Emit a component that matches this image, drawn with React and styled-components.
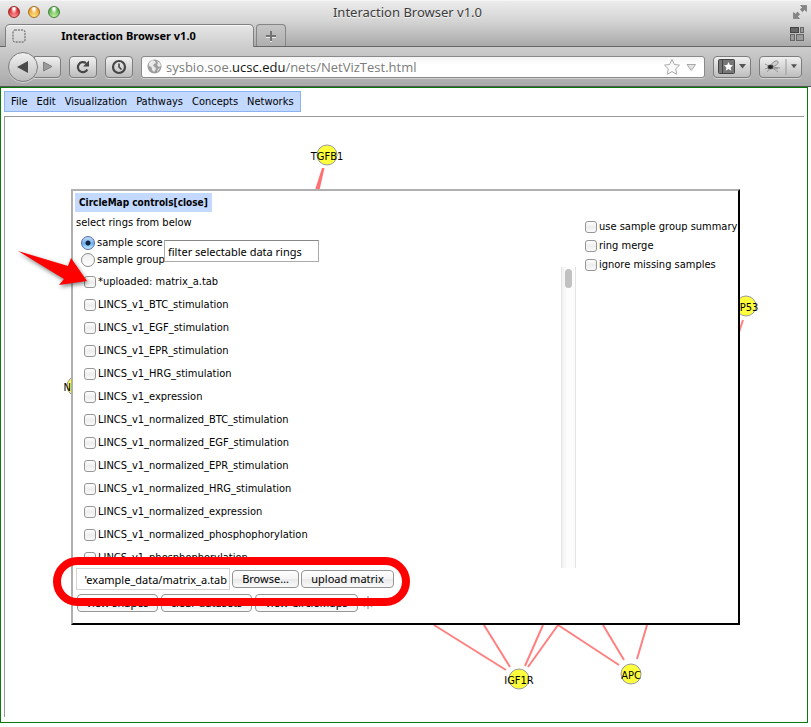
import React from "react";
import styled, { createGlobalStyle, css } from "styled-components";

const GlobalStyle = createGlobalStyle`
  * { box-sizing: border-box; }
  body { margin: 0; background: #fff; color: #000; font: 11px/16px "DejaVu Sans Condensed", "DejaVu Sans", sans-serif; }
  button, input { font: 11px/16px "Noto Sans", "Open Sans", sans-serif; color: inherit; margin: 0; }
`;

const Window = styled.div`
  min-height: 100vh;
  display: flex;
  flex-direction: column;
`;

const TitleArea = styled.header`
  height: 47px;
  display: flex;
  flex-direction: column;
  background: linear-gradient(#ececec, #d4d4d4 45%, #a9a9a9);
  border-bottom: 1px solid #666;
  border-top: 1px solid #f6f6f6;
`;

const TitleRow = styled.div`
  display: grid;
  grid-template-columns: 64px 1fr 64px;
  align-items: center;
  height: 22px;
  padding: 0 4px 0 8px;
`;

const Lights = styled.div`
  display: flex;
  gap: 8px;
`;

const Light = styled.button`
  width: 12px;
  height: 12px;
  padding: 0;
  border: 1px solid ${(p) => p.$edge};
  border-radius: 50%;
  background: radial-gradient(ellipse at 50% 15%, #fff 0 12%, transparent 45%),
    radial-gradient(circle at 50% 100%, ${(p) => p.$glow}, ${(p) => p.$fill} 75%);
`;

const WindowTitle = styled.h1`
  margin: 0;
  font-family: "Noto Sans", sans-serif;
  font-size: 13px;
  font-weight: 400;
  line-height: 18px;
  text-align: center;
  color: #3c3c3c;
  text-shadow: 0 1px 0 #f4f4f4;
`;

const IconButton = styled.button`
  display: grid;
  place-items: center;
  justify-self: end;
  border: 0;
  padding: 0;
  background: none;
`;

const TabStrip = styled.div`
  display: flex;
  align-items: flex-end;
  gap: 2px;
  height: 23px;
  padding: 0 7px 0 5px;
`;

const Tab = styled.button`
  display: grid;
  grid-template-columns: 14px 1fr 16px;
  align-items: center;
  width: 249px;
  height: 23px;
  margin-bottom: -1px;
  padding: 0 6px;
  border: 1px solid #808080;
  border-bottom: 0;
  border-radius: 5px 5px 0 0;
  background: linear-gradient(#e6e6e6, #cdcdcd);
  box-shadow: inset 0 1px #f8f8f8;
  font-weight: 700;
`;

const NewTab = styled.button`
  display: grid;
  place-items: center;
  width: 30px;
  height: 22px;
  border: 1px solid #858585;
  border-bottom: 0;
  border-radius: 4px 4px 0 0;
  background: linear-gradient(#c6c6c6, #aeaeae);
`;

const Spacer = styled.div`
  flex: 1;
`;

const Toolbar = styled.nav`
  display: flex;
  align-items: center;
  gap: 8px;
  height: 40px;
  padding: 0 9px 0 8px;
  background: linear-gradient(#cdcdcd, #a9a9a9);
  border-bottom: 1px solid #555;
`;

const raised = css`
  border: 1px solid #7d7d7d;
  background: linear-gradient(#f0f0f0, #bdbdbd);
  box-shadow: 0 1px #d5d5d5;
`;

const ToolButton = styled.button`
  ${raised}
  display: flex;
  align-items: center;
  justify-content: center;
  gap: 4px;
  width: ${(p) => p.$w || 28}px;
  height: 22px;
  padding: 0;
  border-radius: 4px;
`;

const BackForward = styled.div`
  display: flex;
  align-items: center;
`;

const Back = styled.button`
  ${raised}
  display: grid;
  place-items: center;
  width: 30px;
  height: 30px;
  padding: 0;
  border-radius: 50%;
  z-index: 1;
`;

const Forward = styled(ToolButton)`
  width: 27px;
  margin-left: -4px;
  border-radius: 0 4px 4px 0;
`;

const AddressBar = styled.div`
  flex: 1;
  display: flex;
  align-items: center;
  gap: 4px;
  height: 22px;
  padding: 0 5px;
  border: 1px solid #8a8a8a;
  border-radius: 3px;
  background: linear-gradient(#f4f4f4, #fff 40%);
  box-shadow: 0 1px #cfcfcf;
`;

const Address = styled.div`
  flex: 1;
  font-family: "Open Sans", "Noto Sans", sans-serif;
  font-size: 13px;
  line-height: 20px;
  color: #7b7b7b;
  b { font-weight: 400; color: #111; }
`;

const Page = styled.main`
  flex: 1;
  display: flex;
  flex-direction: column;
  margin: 0 3px 4px 0;
  padding: 3px 3px 5px;
  border: 1px solid #0a7a0a;
`;

const MenuBar = styled.nav`
  align-self: flex-start;
  display: flex;
  gap: 9px;
  padding: 1px 6px;
  border: 1px solid #8db2f3;
  background: #c3d9ff;
`;

const MenuLink = styled.a`
  line-height: 17px;
  color: #000;
  text-decoration: none;
`;

const Canvas = styled.section`
  position: relative;
  flex: 1;
  min-height: 600px;
  margin-top: 4px;
  border: solid #999;
  border-width: 1px 0 0 1px;
`;

const Network = styled.svg`
  position: absolute;
  left: 0;
  top: 0;
  width: 100%;
  height: 100%;
  font-size: 11px;
`;

const Dialog = styled.section`
  position: absolute;
  left: 66px;
  right: 64px;
  top: 72px;
  padding: 2px 2px 8px;
  background: #fff;
  border: 2px solid;
  border-color: #b0b0b0 #000 #000 #b0b0b0;
`;

const DialogTitle = styled.h2`
  width: fit-content;
  margin: 0;
  padding: 0 4px;
  background: #c3d9ff;
  font-size: 10px;
  line-height: 19px;
`;

const TitleClose = styled.button`
  border: 0;
  padding: 0;
  background: none;
  font: inherit;
`;

const Columns = styled.div`
  display: flex;
  justify-content: space-between;
`;

const Rings = styled.div`
  width: 501px;
`;

const Hint = styled.p`
  margin: 0;
  padding: 3px 1px;
`;

const Filters = styled.div`
  display: flex;
  align-items: flex-start;
  height: 33px;
  padding-left: 6px;
`;

const Radios = styled.div`
  width: 83px;
`;

const Label = styled.label`
  display: flex;
  align-items: center;
  gap: 2px;
  height: ${(p) => p.$h}px;
  white-space: nowrap;
`;

const Radio = styled.input`
  appearance: none;
  flex: none;
  width: 14px;
  height: 14px;
  border: 1px solid #8b8b8b;
  border-radius: 50%;
  background: linear-gradient(#eee, #fff);
  &:checked {
    border-color: #5069a8;
    background: radial-gradient(circle, #10233f 0 2px, transparent 3px),
      linear-gradient(#c6dcf5, #6db1ee 55%, #c2f0ff);
  }
`;

const Check = styled.input`
  appearance: none;
  flex: none;
  width: 12px;
  height: 12px;
  border: 1px solid #969696;
  border-radius: 3px;
  background: linear-gradient(#fff, #ededed 50%, #fafafa);
`;

const FilterInput = styled.input`
  width: 155px;
  height: 22px;
  margin-top: 6px;
  padding: 0 3px;
  border: 1px solid #aaa;
  border-top-color: #888;
  background: #fff;
`;

const ListBox = styled.div`
  display: flex;
  height: 301px;
`;

const List = styled.ul`
  flex: 1;
  margin: 0;
  padding: 3px 9px;
  overflow: hidden;
  list-style: none;
`;

const ScrollTrack = styled.div`
  width: 15px;
  padding: 2px 3px;
  border: solid #e4e4e4;
  border-width: 0 1px;
  background: linear-gradient(90deg, #f1f1f1, #fcfcfc 40%);
`;

const ScrollThumb = styled.div`
  height: 19px;
  border-radius: 4px;
  background: #c1c1c1;
`;

const Options = styled.div`
  width: 151px;
  padding-top: 5px;
`;

const Actions = styled.div`
  display: flex;
  align-items: center;
  gap: ${(p) => p.$gap}px;
  height: ${(p) => p.$h}px;
  padding-left: ${(p) => p.$indent}px;
`;

const FileField = styled.input`
  width: 154px;
  height: 22px;
  padding: 0 2px;
  border: 1px solid #d4d4d4;
  text-align: right;
`;

const Push = styled.button`
  height: 18px;
  width: ${(p) => p.$w}px;
  padding: 0;
  line-height: 16px;
  white-space: nowrap;
  border: 1px solid #959595;
  border-radius: 4px;
  background: linear-gradient(#fff, #f4f4f4 48%, #e9e9e9 52%, #fafafa);
`;

const Highlight = styled.div`
  position: absolute;
  left: -20px;
  bottom: 17px;
  width: 357px;
  height: 49px;
  border: 8px solid #f00;
  border-radius: 25px;
  pointer-events: none;
`;

const Arrow = styled.svg`
  position: absolute;
  left: -60px;
  top: 52px;
  filter: drop-shadow(1px 2px 2px rgba(0, 0, 0, 0.5));
  pointer-events: none;
`;

const rings = [
  "*uploaded: matrix_a.tab",
  "LINCS_v1_BTC_stimulation",
  "LINCS_v1_EGF_stimulation",
  "LINCS_v1_EPR_stimulation",
  "LINCS_v1_HRG_stimulation",
  "LINCS_v1_expression",
  "LINCS_v1_normalized_BTC_stimulation",
  "LINCS_v1_normalized_EGF_stimulation",
  "LINCS_v1_normalized_EPR_stimulation",
  "LINCS_v1_normalized_HRG_stimulation",
  "LINCS_v1_normalized_expression",
  "LINCS_v1_normalized_phosphophorylation",
  "LINCS_v1_phosphophorylation",
];

const options = ["use sample group summary", "ring merge", "ignore missing samples"];
const menus = ["File", "Edit", "Visualization", "Pathways", "Concepts", "Networks"];

const nodes = [
  { id: "TGFB1", x: 322, y: 38 },
  { id: "TP53", x: 741, y: 189 },
  { id: "NRAS", x: 72, y: 269 },
  { id: "IGF1R", x: 514, y: 562 },
  { id: "APC", x: 626, y: 557 },
];

const edges = [
  [429, 508, 501, 553],
  [479, 508, 505, 550],
  [538, 508, 520, 549],
  [553, 508, 523, 550],
  [553, 508, 614, 548],
  [598, 508, 619, 543],
  [642, 508, 632, 542],
  [738, 203, 728, 233],
];

const Chevron = ({ size = 7 }) => (
  <svg width={size} height="5" viewBox="0 0 7 5"><path d="M0 0h7L3.5 4.5z" fill="#555" /></svg>
);

function Chrome() {
  return (
    <>
      <TitleArea>
        <TitleRow>
          <Lights>
            <Light aria-label="Close" $edge="#9b2a2a" $fill="#d8232b" $glow="#ff9c9c" />
            <Light aria-label="Minimize" $edge="#a86c20" $fill="#eb9c26" $glow="#ffe98a" />
            <Light aria-label="Zoom" $edge="#47803c" $fill="#55ae45" $glow="#c7f7a6" />
          </Lights>
          <WindowTitle>Interaction Browser v1.0</WindowTitle>
          <IconButton aria-label="Full screen">
            <svg width="14" height="14" viewBox="0 0 14 14" fill="#858585" stroke="#6d6d6d" strokeWidth="0.6">
              <path d="M7.500.5h6v6l-2-2-2 2.200-2.200-2.200 2.200-2z" />
              <path d="M.5 7.500v6h6l-2-2 2.200-2.200-2.200-2.200-2 2.200z" />
            </svg>
          </IconButton>
        </TitleRow>
        <TabStrip>
          <Tab>
            <svg width="14" height="14"><rect x="1" y="1" width="12" height="12" rx="2" fill="none" stroke="#555" strokeDasharray="2 1" /></svg>
            <span>Interaction Browser v1.0</span>
          </Tab>
          <NewTab aria-label="New tab">
            <svg width="12" height="12"><path d="M6 1v10M1 6h10" stroke="#eee" strokeWidth="2" transform="translate(0 1)" /><path d="M6 1v10M1 6h10" stroke="#737373" strokeWidth="2" /></svg>
          </NewTab>
          <Spacer />
          <IconButton aria-label="Tab groups">
            <svg width="14" height="21" viewBox="0 0 14 21" stroke="#666" fill="#9a9a9a">
              <rect x=".5" y="2.500" width="8" height="5" fill="#666" stroke="#444" /><rect x="10.500" y="2.500" width="3" height="5" />
              <rect x=".5" y="9.500" width="4" height="6" /><rect x="6.500" y="9.500" width="7" height="6" />
            </svg>
          </IconButton>
        </TabStrip>
      </TitleArea>
      <Toolbar aria-label="Navigation">
        <BackForward>
          <Back aria-label="Back"><svg width="14" height="14"><path d="M1 7 12 1v12z" fill="#4a4a4a" /></svg></Back>
          <Forward aria-label="Forward"><svg width="10" height="11"><path d="M9 5.500.5 1v9z" fill="#9a9a9a" stroke="#808080" /></svg></Forward>
        </BackForward>
        <ToolButton aria-label="Reload">
          <svg width="16" height="16" fill="none" stroke="#454545" strokeWidth="2.200"><path d="M12.300 10.500A5 5 0 1 1 11 4.200" /><path d="M14 1.500v6H8z" fill="#454545" stroke="none" /></svg>
        </ToolButton>
        <ToolButton aria-label="History">
          <svg width="16" height="16" fill="none" stroke="#454545"><circle cx="8" cy="8" r="6" strokeWidth="2.200" /><path d="M8 4.500V8l2.500 2.500" strokeWidth="1.600" /></svg>
        </ToolButton>
        <AddressBar>
          <svg width="15" height="15" viewBox="0 0 15 15"><circle cx="7.500" cy="7.500" r="7" fill="#9d9d9d" /><path d="m2 4 3-3 3 1 1 2-2 1-1 2 2 1 1 2-2 3-2-2-.5-3L2 7zm8-2 3 2 1 3-2 1-2-2 1-2zm1 8 2-1-2 3-1 1z" fill="#e9e9e9" /></svg>
          <Address>sysbio.soe.<b>ucsc.edu</b>/nets/NetVizTest.html</Address>
          <svg width="37" height="18" fill="#fafafa" stroke="#aaa"><path d="m10 1.500 2.300 5 5.200.6-3.800 3.700 1 5.500-4.700-2.700-4.700 2.700 1-5.500L2.500 7.100l5.200-.6z" /><path d="M25 6.500h8.500L29.300 12.500z" fill="#e3e3e3" /></svg>
        </AddressBar>
        <ToolButton aria-label="Bookmarks" $w={38}>
          <svg width="17" height="15"><rect x=".5" y=".5" width="16" height="14" rx="1" fill="#777" stroke="#444" /><path d="M4.500 1v13" stroke="#444" /><path d="m10.500 3 1.300 3 3.200.3-2.400 2.200.7 3.200-2.800-1.700-2.800 1.700.7-3.200L6 6.300 9.200 6z" fill="#fff" /></svg>
          <Chevron />
        </ToolButton>
        <ToolButton aria-label="Firebug" $w={43}>
          <svg width="17" height="15" fill="none" stroke="#888" strokeWidth=".8"><path d="M1 5l6 3 9 1M3 13l4-5 4-6M1 10l6-2 7 5" /><ellipse cx="11" cy="4.500" rx="3.600" ry="2.100" transform="rotate(-35 11 4.500)" fill="#ccc" /><ellipse cx="6.500" cy="8" rx="2.600" ry="2" fill="#222" stroke="#444" /><path d="M9 8.500l5 1" stroke="#999" strokeWidth="2" /></svg>
          <svg width="2" height="16"><path d="M1 0v16" stroke="#999" /></svg>
          <Chevron size={6} />
        </ToolButton>
      </Toolbar>
    </>
  );
}

function NetworkGraph() {
  return (
    <Network aria-label="Pathway network">
      <path d="M317 51h2.500l-5 22h-4.500z" fill="#ff7070" />
      {edges.map(([x1, y1, x2, y2]) => (
        <line key={`${x1}-${x2}`} x1={x1} y1={y1} x2={x2} y2={y2} stroke="#ff8080" strokeWidth="2" />
      ))}
      {nodes.map((n) => (
        <g key={n.id}>
          <circle cx={n.x} cy={n.y} r="10" fill="#ffff3c" stroke="#999" />
          <text x={n.x} y={n.y + 5} textAnchor="middle">{n.id}</text>
        </g>
      ))}
    </Network>
  );
}

function Controls() {
  return (
    <Dialog aria-label="CircleMap controls">
      <DialogTitle>CircleMap controls<TitleClose>[close]</TitleClose></DialogTitle>
      <Columns>
        <Rings>
          <Hint>select rings from below</Hint>
          <Filters>
            <Radios>
              <Label $h={17}><Radio type="radio" name="mode" defaultChecked />sample score</Label>
              <Label $h={17}><Radio type="radio" name="mode" />sample group</Label>
            </Radios>
            <FilterInput aria-label="Filter rings" defaultValue="filter selectable data rings" />
          </Filters>
          <ListBox>
            <List>
              {rings.map((r) => (
                <li key={r}><Label $h={23}><Check type="checkbox" />{r}</Label></li>
              ))}
            </List>
            <ScrollTrack><ScrollThumb /></ScrollTrack>
          </ListBox>
        </Rings>
        <Options>
          {options.map((o) => (
            <Label key={o} $h={19}><Check type="checkbox" />{o}</Label>
          ))}
        </Options>
      </Columns>
      <Actions $h={22} $indent={1} $gap={2}>
        <FileField aria-label="Matrix file" readOnly value="'example_data/matrix_a.tab" />
        <Push $w={67}>Browse…</Push>
        <Push $w={93}>upload matrix</Push>
      </Actions>
      <Actions $h={25} $indent={2} $gap={3}>
        <Push $w={81}>view shapes</Push>
        <Push $w={91}>clear datasets</Push>
        <Push $w={103}>view CircleMaps</Push>
        <svg width="14" height="16" stroke="#aaa" strokeWidth="1.500"><path d="M7 1v4M7 9v5M1 7h4M9 7h5M3 3l3 3M8 8l3 4M11 3 8 6M6 8l-3 4" /></svg>
      </Actions>
      <Highlight />
      <Arrow width="84" height="50"><path d="M5 8 55 23l3-8L74 38 46 42l5-6z" fill="#f00" /></Arrow>
    </Dialog>
  );
}

export default function App() {
  return (
    <Window>
      <GlobalStyle />
      <Chrome />
      <Page>
        <MenuBar aria-label="Main menu">
          {menus.map((m) => <MenuLink key={m} href="#">{m}</MenuLink>)}
        </MenuBar>
        <Canvas>
          <NetworkGraph />
          <Controls />
        </Canvas>
      </Page>
    </Window>
  );
}
